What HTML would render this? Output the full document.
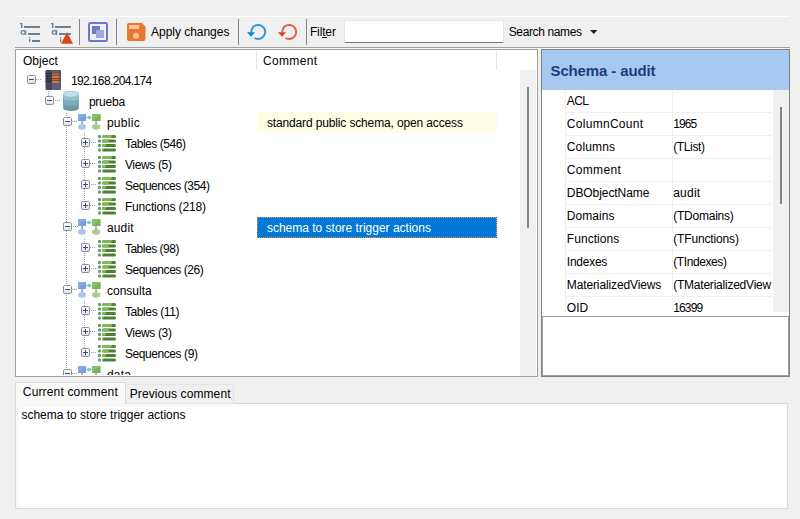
<!DOCTYPE html>
<html><head><meta charset="utf-8"><style>
html,body{margin:0;padding:0;background:#f0f0f0;width:800px;height:519px;overflow:hidden}
svg text{font-family:"Liberation Sans", sans-serif;white-space:pre}
</style></head><body>
<svg width="800" height="519" viewBox="0 0 800 519" style="display:block">
<defs><linearGradient id="bxg" x1="0" y1="0" x2="0" y2="1"><stop offset="0" stop-color="#ffffff"/><stop offset="0.5" stop-color="#f4f4f4"/><stop offset="1" stop-color="#dcdcdc"/></linearGradient></defs>
<rect x="0" y="0" width="800" height="519" fill="#f0f0f0" />
<rect x="15" y="16" width="775" height="1" fill="#ffffff" />
<rect x="15" y="47" width="775" height="1" fill="#a0a0a0" />
<rect x="15" y="48" width="775" height="1" fill="#f7f7f7" />
<rect x="79" y="19" width="1" height="26" fill="#858585" />
<rect x="116" y="19" width="1" height="26" fill="#858585" />
<rect x="238" y="19" width="1" height="26" fill="#858585" />
<rect x="306" y="19" width="1" height="26" fill="#858585" />
<rect x="20" y="23" width="2" height="1.3" fill="#68838f" />
<rect x="21" y="23" width="1.4" height="5" fill="#68838f" />
<rect x="24" y="26" width="16" height="2" fill="#68838f" />
<ellipse cx="23.2" cy="32.4" rx="2.0" ry="1.85" stroke="#68838f" stroke-width="1.15" fill="none"/>
<rect x="24.9" y="30.2" width="1.3" height="4.8" fill="#68838f" />
<rect x="28" y="33" width="12" height="2" fill="#68838f" />
<rect x="29" y="37" width="1.3" height="1.3" fill="#68838f" />
<rect x="29" y="39" width="1.3" height="3" fill="#68838f" />
<rect x="32" y="40" width="8" height="2" fill="#68838f" />
<rect x="51" y="23" width="2" height="1.3" fill="#68838f" />
<rect x="52" y="23" width="1.4" height="5" fill="#68838f" />
<rect x="55" y="26" width="16" height="2" fill="#68838f" />
<ellipse cx="54.2" cy="32.4" rx="2.0" ry="1.85" stroke="#68838f" stroke-width="1.15" fill="none"/>
<rect x="55.9" y="30.2" width="1.3" height="4.8" fill="#68838f" />
<rect x="59" y="33" width="12" height="2" fill="#68838f" />
<rect x="60" y="37" width="1.3" height="1.3" fill="#68838f" />
<rect x="60" y="39" width="1.3" height="3" fill="#68838f" />
<path d="M61 43.8 L67 32.2 L73 43.8 Z" fill="#d9461c"/>
<rect x="89" y="23" width="18" height="18" rx="1.5" fill="none" stroke="#6b78cc" stroke-width="2"/>
<rect x="92" y="26" width="8" height="8" fill="#6c79cf" />
<rect x="96" y="30" width="8" height="8" fill="#9ea8e2" />
<path d="M128.5 23 L142 23 L145.5 26.5 L145.5 39 Q145.5 41 143.5 41 L129 41 Q127 41 127 39 L127 25 Q127 23 129 23 Z" fill="#e8782f"/>
<rect x="129" y="25" width="10" height="4" fill="#f5c3a0" />
<circle cx="136" cy="35.8" r="3" fill="#f5c3a0"/>
<text x="151.10" y="36.10" font-size="12" fill="#000" font-weight="normal" textLength="78.30" lengthAdjust="spacing" >Apply changes</text>
<path d="M251.20 31.90 A7.0 7.0 0 1 1 255.35 38.29" stroke="#2b99e2" stroke-width="2" fill="none" stroke-linecap="round"/>
<path d="M247 32.2 L255 32.2 L251 36.8 Z" fill="#0d7fd8"/>
<path d="M282.20 31.90 A7.0 7.0 0 1 1 286.35 38.29" stroke="#e0663f" stroke-width="2" fill="none" stroke-linecap="round"/>
<path d="M278 32.2 L286 32.2 L282 36.8 Z" fill="#d2461f"/>
<text x="309.90" y="36.00" font-size="12" fill="#000" font-weight="normal" textLength="26.00" lengthAdjust="spacing" >Filter</text>
<rect x="322" y="37" width="5" height="1" fill="#000" />
<rect x="344" y="20" width="160" height="23" fill="#e6e6e6" />
<rect x="345" y="21" width="158" height="21" fill="#ffffff" />
<rect x="345" y="42" width="158" height="1" fill="#767676" />
<text x="508.70" y="35.50" font-size="12" fill="#000" font-weight="normal" textLength="73.30" lengthAdjust="spacing" >Search names</text>
<path d="M590 30 L597.5 30 L593.75 34 Z" fill="#222"/>
<rect x="15" y="49" width="523" height="328" fill="#a0a0a0" />
<rect x="16" y="50" width="521" height="326" fill="#ffffff" />
<text x="22.90" y="64.75" font-size="12" fill="#000" font-weight="normal" textLength="35.00" lengthAdjust="spacing" >Object</text>
<text x="262.90" y="64.80" font-size="12" fill="#000" font-weight="normal" textLength="54.30" lengthAdjust="spacing" >Comment</text>
<rect x="256" y="51" width="1" height="19" fill="#e5e5e5" />
<rect x="496" y="51" width="1" height="19" fill="#e5e5e5" />
<rect x="520" y="70" width="16" height="306" fill="#f0f0f0" />
<rect x="527" y="87" width="2" height="141" fill="#858585" />
<svg x="16" y="50" width="504" height="325" overflow="hidden"><g transform="translate(-16,-50)">
<rect x="257" y="112" width="240" height="21" fill="#fffde5" />
<text x="266.90" y="126.50" font-size="12" fill="#000" font-weight="normal" textLength="196.00" lengthAdjust="spacing" >standard public schema, open access</text>
<rect x="257" y="217" width="240" height="21" fill="#0078d7" />
<rect x="257" y="217" width="1" height="1" fill="#f59434" />
<rect x="257" y="237" width="1" height="1" fill="#f59434" />
<rect x="259" y="217" width="1" height="1" fill="#f59434" />
<rect x="259" y="237" width="1" height="1" fill="#f59434" />
<rect x="261" y="217" width="1" height="1" fill="#f59434" />
<rect x="261" y="237" width="1" height="1" fill="#f59434" />
<rect x="263" y="217" width="1" height="1" fill="#f59434" />
<rect x="263" y="237" width="1" height="1" fill="#f59434" />
<rect x="265" y="217" width="1" height="1" fill="#f59434" />
<rect x="265" y="237" width="1" height="1" fill="#f59434" />
<rect x="267" y="217" width="1" height="1" fill="#f59434" />
<rect x="267" y="237" width="1" height="1" fill="#f59434" />
<rect x="269" y="217" width="1" height="1" fill="#f59434" />
<rect x="269" y="237" width="1" height="1" fill="#f59434" />
<rect x="271" y="217" width="1" height="1" fill="#f59434" />
<rect x="271" y="237" width="1" height="1" fill="#f59434" />
<rect x="273" y="217" width="1" height="1" fill="#f59434" />
<rect x="273" y="237" width="1" height="1" fill="#f59434" />
<rect x="275" y="217" width="1" height="1" fill="#f59434" />
<rect x="275" y="237" width="1" height="1" fill="#f59434" />
<rect x="277" y="217" width="1" height="1" fill="#f59434" />
<rect x="277" y="237" width="1" height="1" fill="#f59434" />
<rect x="279" y="217" width="1" height="1" fill="#f59434" />
<rect x="279" y="237" width="1" height="1" fill="#f59434" />
<rect x="281" y="217" width="1" height="1" fill="#f59434" />
<rect x="281" y="237" width="1" height="1" fill="#f59434" />
<rect x="283" y="217" width="1" height="1" fill="#f59434" />
<rect x="283" y="237" width="1" height="1" fill="#f59434" />
<rect x="285" y="217" width="1" height="1" fill="#f59434" />
<rect x="285" y="237" width="1" height="1" fill="#f59434" />
<rect x="287" y="217" width="1" height="1" fill="#f59434" />
<rect x="287" y="237" width="1" height="1" fill="#f59434" />
<rect x="289" y="217" width="1" height="1" fill="#f59434" />
<rect x="289" y="237" width="1" height="1" fill="#f59434" />
<rect x="291" y="217" width="1" height="1" fill="#f59434" />
<rect x="291" y="237" width="1" height="1" fill="#f59434" />
<rect x="293" y="217" width="1" height="1" fill="#f59434" />
<rect x="293" y="237" width="1" height="1" fill="#f59434" />
<rect x="295" y="217" width="1" height="1" fill="#f59434" />
<rect x="295" y="237" width="1" height="1" fill="#f59434" />
<rect x="297" y="217" width="1" height="1" fill="#f59434" />
<rect x="297" y="237" width="1" height="1" fill="#f59434" />
<rect x="299" y="217" width="1" height="1" fill="#f59434" />
<rect x="299" y="237" width="1" height="1" fill="#f59434" />
<rect x="301" y="217" width="1" height="1" fill="#f59434" />
<rect x="301" y="237" width="1" height="1" fill="#f59434" />
<rect x="303" y="217" width="1" height="1" fill="#f59434" />
<rect x="303" y="237" width="1" height="1" fill="#f59434" />
<rect x="305" y="217" width="1" height="1" fill="#f59434" />
<rect x="305" y="237" width="1" height="1" fill="#f59434" />
<rect x="307" y="217" width="1" height="1" fill="#f59434" />
<rect x="307" y="237" width="1" height="1" fill="#f59434" />
<rect x="309" y="217" width="1" height="1" fill="#f59434" />
<rect x="309" y="237" width="1" height="1" fill="#f59434" />
<rect x="311" y="217" width="1" height="1" fill="#f59434" />
<rect x="311" y="237" width="1" height="1" fill="#f59434" />
<rect x="313" y="217" width="1" height="1" fill="#f59434" />
<rect x="313" y="237" width="1" height="1" fill="#f59434" />
<rect x="315" y="217" width="1" height="1" fill="#f59434" />
<rect x="315" y="237" width="1" height="1" fill="#f59434" />
<rect x="317" y="217" width="1" height="1" fill="#f59434" />
<rect x="317" y="237" width="1" height="1" fill="#f59434" />
<rect x="319" y="217" width="1" height="1" fill="#f59434" />
<rect x="319" y="237" width="1" height="1" fill="#f59434" />
<rect x="321" y="217" width="1" height="1" fill="#f59434" />
<rect x="321" y="237" width="1" height="1" fill="#f59434" />
<rect x="323" y="217" width="1" height="1" fill="#f59434" />
<rect x="323" y="237" width="1" height="1" fill="#f59434" />
<rect x="325" y="217" width="1" height="1" fill="#f59434" />
<rect x="325" y="237" width="1" height="1" fill="#f59434" />
<rect x="327" y="217" width="1" height="1" fill="#f59434" />
<rect x="327" y="237" width="1" height="1" fill="#f59434" />
<rect x="329" y="217" width="1" height="1" fill="#f59434" />
<rect x="329" y="237" width="1" height="1" fill="#f59434" />
<rect x="331" y="217" width="1" height="1" fill="#f59434" />
<rect x="331" y="237" width="1" height="1" fill="#f59434" />
<rect x="333" y="217" width="1" height="1" fill="#f59434" />
<rect x="333" y="237" width="1" height="1" fill="#f59434" />
<rect x="335" y="217" width="1" height="1" fill="#f59434" />
<rect x="335" y="237" width="1" height="1" fill="#f59434" />
<rect x="337" y="217" width="1" height="1" fill="#f59434" />
<rect x="337" y="237" width="1" height="1" fill="#f59434" />
<rect x="339" y="217" width="1" height="1" fill="#f59434" />
<rect x="339" y="237" width="1" height="1" fill="#f59434" />
<rect x="341" y="217" width="1" height="1" fill="#f59434" />
<rect x="341" y="237" width="1" height="1" fill="#f59434" />
<rect x="343" y="217" width="1" height="1" fill="#f59434" />
<rect x="343" y="237" width="1" height="1" fill="#f59434" />
<rect x="345" y="217" width="1" height="1" fill="#f59434" />
<rect x="345" y="237" width="1" height="1" fill="#f59434" />
<rect x="347" y="217" width="1" height="1" fill="#f59434" />
<rect x="347" y="237" width="1" height="1" fill="#f59434" />
<rect x="349" y="217" width="1" height="1" fill="#f59434" />
<rect x="349" y="237" width="1" height="1" fill="#f59434" />
<rect x="351" y="217" width="1" height="1" fill="#f59434" />
<rect x="351" y="237" width="1" height="1" fill="#f59434" />
<rect x="353" y="217" width="1" height="1" fill="#f59434" />
<rect x="353" y="237" width="1" height="1" fill="#f59434" />
<rect x="355" y="217" width="1" height="1" fill="#f59434" />
<rect x="355" y="237" width="1" height="1" fill="#f59434" />
<rect x="357" y="217" width="1" height="1" fill="#f59434" />
<rect x="357" y="237" width="1" height="1" fill="#f59434" />
<rect x="359" y="217" width="1" height="1" fill="#f59434" />
<rect x="359" y="237" width="1" height="1" fill="#f59434" />
<rect x="361" y="217" width="1" height="1" fill="#f59434" />
<rect x="361" y="237" width="1" height="1" fill="#f59434" />
<rect x="363" y="217" width="1" height="1" fill="#f59434" />
<rect x="363" y="237" width="1" height="1" fill="#f59434" />
<rect x="365" y="217" width="1" height="1" fill="#f59434" />
<rect x="365" y="237" width="1" height="1" fill="#f59434" />
<rect x="367" y="217" width="1" height="1" fill="#f59434" />
<rect x="367" y="237" width="1" height="1" fill="#f59434" />
<rect x="369" y="217" width="1" height="1" fill="#f59434" />
<rect x="369" y="237" width="1" height="1" fill="#f59434" />
<rect x="371" y="217" width="1" height="1" fill="#f59434" />
<rect x="371" y="237" width="1" height="1" fill="#f59434" />
<rect x="373" y="217" width="1" height="1" fill="#f59434" />
<rect x="373" y="237" width="1" height="1" fill="#f59434" />
<rect x="375" y="217" width="1" height="1" fill="#f59434" />
<rect x="375" y="237" width="1" height="1" fill="#f59434" />
<rect x="377" y="217" width="1" height="1" fill="#f59434" />
<rect x="377" y="237" width="1" height="1" fill="#f59434" />
<rect x="379" y="217" width="1" height="1" fill="#f59434" />
<rect x="379" y="237" width="1" height="1" fill="#f59434" />
<rect x="381" y="217" width="1" height="1" fill="#f59434" />
<rect x="381" y="237" width="1" height="1" fill="#f59434" />
<rect x="383" y="217" width="1" height="1" fill="#f59434" />
<rect x="383" y="237" width="1" height="1" fill="#f59434" />
<rect x="385" y="217" width="1" height="1" fill="#f59434" />
<rect x="385" y="237" width="1" height="1" fill="#f59434" />
<rect x="387" y="217" width="1" height="1" fill="#f59434" />
<rect x="387" y="237" width="1" height="1" fill="#f59434" />
<rect x="389" y="217" width="1" height="1" fill="#f59434" />
<rect x="389" y="237" width="1" height="1" fill="#f59434" />
<rect x="391" y="217" width="1" height="1" fill="#f59434" />
<rect x="391" y="237" width="1" height="1" fill="#f59434" />
<rect x="393" y="217" width="1" height="1" fill="#f59434" />
<rect x="393" y="237" width="1" height="1" fill="#f59434" />
<rect x="395" y="217" width="1" height="1" fill="#f59434" />
<rect x="395" y="237" width="1" height="1" fill="#f59434" />
<rect x="397" y="217" width="1" height="1" fill="#f59434" />
<rect x="397" y="237" width="1" height="1" fill="#f59434" />
<rect x="399" y="217" width="1" height="1" fill="#f59434" />
<rect x="399" y="237" width="1" height="1" fill="#f59434" />
<rect x="401" y="217" width="1" height="1" fill="#f59434" />
<rect x="401" y="237" width="1" height="1" fill="#f59434" />
<rect x="403" y="217" width="1" height="1" fill="#f59434" />
<rect x="403" y="237" width="1" height="1" fill="#f59434" />
<rect x="405" y="217" width="1" height="1" fill="#f59434" />
<rect x="405" y="237" width="1" height="1" fill="#f59434" />
<rect x="407" y="217" width="1" height="1" fill="#f59434" />
<rect x="407" y="237" width="1" height="1" fill="#f59434" />
<rect x="409" y="217" width="1" height="1" fill="#f59434" />
<rect x="409" y="237" width="1" height="1" fill="#f59434" />
<rect x="411" y="217" width="1" height="1" fill="#f59434" />
<rect x="411" y="237" width="1" height="1" fill="#f59434" />
<rect x="413" y="217" width="1" height="1" fill="#f59434" />
<rect x="413" y="237" width="1" height="1" fill="#f59434" />
<rect x="415" y="217" width="1" height="1" fill="#f59434" />
<rect x="415" y="237" width="1" height="1" fill="#f59434" />
<rect x="417" y="217" width="1" height="1" fill="#f59434" />
<rect x="417" y="237" width="1" height="1" fill="#f59434" />
<rect x="419" y="217" width="1" height="1" fill="#f59434" />
<rect x="419" y="237" width="1" height="1" fill="#f59434" />
<rect x="421" y="217" width="1" height="1" fill="#f59434" />
<rect x="421" y="237" width="1" height="1" fill="#f59434" />
<rect x="423" y="217" width="1" height="1" fill="#f59434" />
<rect x="423" y="237" width="1" height="1" fill="#f59434" />
<rect x="425" y="217" width="1" height="1" fill="#f59434" />
<rect x="425" y="237" width="1" height="1" fill="#f59434" />
<rect x="427" y="217" width="1" height="1" fill="#f59434" />
<rect x="427" y="237" width="1" height="1" fill="#f59434" />
<rect x="429" y="217" width="1" height="1" fill="#f59434" />
<rect x="429" y="237" width="1" height="1" fill="#f59434" />
<rect x="431" y="217" width="1" height="1" fill="#f59434" />
<rect x="431" y="237" width="1" height="1" fill="#f59434" />
<rect x="433" y="217" width="1" height="1" fill="#f59434" />
<rect x="433" y="237" width="1" height="1" fill="#f59434" />
<rect x="435" y="217" width="1" height="1" fill="#f59434" />
<rect x="435" y="237" width="1" height="1" fill="#f59434" />
<rect x="437" y="217" width="1" height="1" fill="#f59434" />
<rect x="437" y="237" width="1" height="1" fill="#f59434" />
<rect x="439" y="217" width="1" height="1" fill="#f59434" />
<rect x="439" y="237" width="1" height="1" fill="#f59434" />
<rect x="441" y="217" width="1" height="1" fill="#f59434" />
<rect x="441" y="237" width="1" height="1" fill="#f59434" />
<rect x="443" y="217" width="1" height="1" fill="#f59434" />
<rect x="443" y="237" width="1" height="1" fill="#f59434" />
<rect x="445" y="217" width="1" height="1" fill="#f59434" />
<rect x="445" y="237" width="1" height="1" fill="#f59434" />
<rect x="447" y="217" width="1" height="1" fill="#f59434" />
<rect x="447" y="237" width="1" height="1" fill="#f59434" />
<rect x="449" y="217" width="1" height="1" fill="#f59434" />
<rect x="449" y="237" width="1" height="1" fill="#f59434" />
<rect x="451" y="217" width="1" height="1" fill="#f59434" />
<rect x="451" y="237" width="1" height="1" fill="#f59434" />
<rect x="453" y="217" width="1" height="1" fill="#f59434" />
<rect x="453" y="237" width="1" height="1" fill="#f59434" />
<rect x="455" y="217" width="1" height="1" fill="#f59434" />
<rect x="455" y="237" width="1" height="1" fill="#f59434" />
<rect x="457" y="217" width="1" height="1" fill="#f59434" />
<rect x="457" y="237" width="1" height="1" fill="#f59434" />
<rect x="459" y="217" width="1" height="1" fill="#f59434" />
<rect x="459" y="237" width="1" height="1" fill="#f59434" />
<rect x="461" y="217" width="1" height="1" fill="#f59434" />
<rect x="461" y="237" width="1" height="1" fill="#f59434" />
<rect x="463" y="217" width="1" height="1" fill="#f59434" />
<rect x="463" y="237" width="1" height="1" fill="#f59434" />
<rect x="465" y="217" width="1" height="1" fill="#f59434" />
<rect x="465" y="237" width="1" height="1" fill="#f59434" />
<rect x="467" y="217" width="1" height="1" fill="#f59434" />
<rect x="467" y="237" width="1" height="1" fill="#f59434" />
<rect x="469" y="217" width="1" height="1" fill="#f59434" />
<rect x="469" y="237" width="1" height="1" fill="#f59434" />
<rect x="471" y="217" width="1" height="1" fill="#f59434" />
<rect x="471" y="237" width="1" height="1" fill="#f59434" />
<rect x="473" y="217" width="1" height="1" fill="#f59434" />
<rect x="473" y="237" width="1" height="1" fill="#f59434" />
<rect x="475" y="217" width="1" height="1" fill="#f59434" />
<rect x="475" y="237" width="1" height="1" fill="#f59434" />
<rect x="477" y="217" width="1" height="1" fill="#f59434" />
<rect x="477" y="237" width="1" height="1" fill="#f59434" />
<rect x="479" y="217" width="1" height="1" fill="#f59434" />
<rect x="479" y="237" width="1" height="1" fill="#f59434" />
<rect x="481" y="217" width="1" height="1" fill="#f59434" />
<rect x="481" y="237" width="1" height="1" fill="#f59434" />
<rect x="483" y="217" width="1" height="1" fill="#f59434" />
<rect x="483" y="237" width="1" height="1" fill="#f59434" />
<rect x="485" y="217" width="1" height="1" fill="#f59434" />
<rect x="485" y="237" width="1" height="1" fill="#f59434" />
<rect x="487" y="217" width="1" height="1" fill="#f59434" />
<rect x="487" y="237" width="1" height="1" fill="#f59434" />
<rect x="489" y="217" width="1" height="1" fill="#f59434" />
<rect x="489" y="237" width="1" height="1" fill="#f59434" />
<rect x="491" y="217" width="1" height="1" fill="#f59434" />
<rect x="491" y="237" width="1" height="1" fill="#f59434" />
<rect x="493" y="217" width="1" height="1" fill="#f59434" />
<rect x="493" y="237" width="1" height="1" fill="#f59434" />
<rect x="495" y="217" width="1" height="1" fill="#f59434" />
<rect x="495" y="237" width="1" height="1" fill="#f59434" />
<rect x="496" y="218" width="1" height="1" fill="#f59434" />
<rect x="257" y="219" width="1" height="1" fill="#f59434" />
<rect x="496" y="220" width="1" height="1" fill="#f59434" />
<rect x="257" y="221" width="1" height="1" fill="#f59434" />
<rect x="496" y="222" width="1" height="1" fill="#f59434" />
<rect x="257" y="223" width="1" height="1" fill="#f59434" />
<rect x="496" y="224" width="1" height="1" fill="#f59434" />
<rect x="257" y="225" width="1" height="1" fill="#f59434" />
<rect x="496" y="226" width="1" height="1" fill="#f59434" />
<rect x="257" y="227" width="1" height="1" fill="#f59434" />
<rect x="496" y="228" width="1" height="1" fill="#f59434" />
<rect x="257" y="229" width="1" height="1" fill="#f59434" />
<rect x="496" y="230" width="1" height="1" fill="#f59434" />
<rect x="257" y="231" width="1" height="1" fill="#f59434" />
<rect x="496" y="232" width="1" height="1" fill="#f59434" />
<rect x="257" y="233" width="1" height="1" fill="#f59434" />
<rect x="496" y="234" width="1" height="1" fill="#f59434" />
<rect x="257" y="235" width="1" height="1" fill="#f59434" />
<rect x="496" y="236" width="1" height="1" fill="#f59434" />
<text x="266.90" y="231.50" font-size="12" fill="#ffffff" font-weight="normal" textLength="164.00" lengthAdjust="spacing" >schema to store trigger actions</text>
<rect x="48" y="91" width="1" height="1" fill="#a0a0a0" />
<rect x="48" y="93" width="1" height="1" fill="#a0a0a0" />
<rect x="48" y="95" width="1" height="1" fill="#a0a0a0" />
<rect x="66" y="113" width="1" height="1" fill="#a0a0a0" />
<rect x="66" y="115" width="1" height="1" fill="#a0a0a0" />
<rect x="66" y="117" width="1" height="1" fill="#a0a0a0" />
<rect x="66" y="119" width="1" height="1" fill="#a0a0a0" />
<rect x="66" y="121" width="1" height="1" fill="#a0a0a0" />
<rect x="66" y="123" width="1" height="1" fill="#a0a0a0" />
<rect x="66" y="125" width="1" height="1" fill="#a0a0a0" />
<rect x="66" y="127" width="1" height="1" fill="#a0a0a0" />
<rect x="66" y="129" width="1" height="1" fill="#a0a0a0" />
<rect x="66" y="131" width="1" height="1" fill="#a0a0a0" />
<rect x="66" y="133" width="1" height="1" fill="#a0a0a0" />
<rect x="66" y="135" width="1" height="1" fill="#a0a0a0" />
<rect x="66" y="137" width="1" height="1" fill="#a0a0a0" />
<rect x="66" y="139" width="1" height="1" fill="#a0a0a0" />
<rect x="66" y="141" width="1" height="1" fill="#a0a0a0" />
<rect x="66" y="143" width="1" height="1" fill="#a0a0a0" />
<rect x="66" y="145" width="1" height="1" fill="#a0a0a0" />
<rect x="66" y="147" width="1" height="1" fill="#a0a0a0" />
<rect x="66" y="149" width="1" height="1" fill="#a0a0a0" />
<rect x="66" y="151" width="1" height="1" fill="#a0a0a0" />
<rect x="66" y="153" width="1" height="1" fill="#a0a0a0" />
<rect x="66" y="155" width="1" height="1" fill="#a0a0a0" />
<rect x="66" y="157" width="1" height="1" fill="#a0a0a0" />
<rect x="66" y="159" width="1" height="1" fill="#a0a0a0" />
<rect x="66" y="161" width="1" height="1" fill="#a0a0a0" />
<rect x="66" y="163" width="1" height="1" fill="#a0a0a0" />
<rect x="66" y="165" width="1" height="1" fill="#a0a0a0" />
<rect x="66" y="167" width="1" height="1" fill="#a0a0a0" />
<rect x="66" y="169" width="1" height="1" fill="#a0a0a0" />
<rect x="66" y="171" width="1" height="1" fill="#a0a0a0" />
<rect x="66" y="173" width="1" height="1" fill="#a0a0a0" />
<rect x="66" y="175" width="1" height="1" fill="#a0a0a0" />
<rect x="66" y="177" width="1" height="1" fill="#a0a0a0" />
<rect x="66" y="179" width="1" height="1" fill="#a0a0a0" />
<rect x="66" y="181" width="1" height="1" fill="#a0a0a0" />
<rect x="66" y="183" width="1" height="1" fill="#a0a0a0" />
<rect x="66" y="185" width="1" height="1" fill="#a0a0a0" />
<rect x="66" y="187" width="1" height="1" fill="#a0a0a0" />
<rect x="66" y="189" width="1" height="1" fill="#a0a0a0" />
<rect x="66" y="191" width="1" height="1" fill="#a0a0a0" />
<rect x="66" y="193" width="1" height="1" fill="#a0a0a0" />
<rect x="66" y="195" width="1" height="1" fill="#a0a0a0" />
<rect x="66" y="197" width="1" height="1" fill="#a0a0a0" />
<rect x="66" y="199" width="1" height="1" fill="#a0a0a0" />
<rect x="66" y="201" width="1" height="1" fill="#a0a0a0" />
<rect x="66" y="203" width="1" height="1" fill="#a0a0a0" />
<rect x="66" y="205" width="1" height="1" fill="#a0a0a0" />
<rect x="66" y="207" width="1" height="1" fill="#a0a0a0" />
<rect x="66" y="209" width="1" height="1" fill="#a0a0a0" />
<rect x="66" y="211" width="1" height="1" fill="#a0a0a0" />
<rect x="66" y="213" width="1" height="1" fill="#a0a0a0" />
<rect x="66" y="215" width="1" height="1" fill="#a0a0a0" />
<rect x="66" y="217" width="1" height="1" fill="#a0a0a0" />
<rect x="66" y="219" width="1" height="1" fill="#a0a0a0" />
<rect x="66" y="221" width="1" height="1" fill="#a0a0a0" />
<rect x="66" y="223" width="1" height="1" fill="#a0a0a0" />
<rect x="66" y="225" width="1" height="1" fill="#a0a0a0" />
<rect x="66" y="227" width="1" height="1" fill="#a0a0a0" />
<rect x="66" y="229" width="1" height="1" fill="#a0a0a0" />
<rect x="66" y="231" width="1" height="1" fill="#a0a0a0" />
<rect x="66" y="233" width="1" height="1" fill="#a0a0a0" />
<rect x="66" y="235" width="1" height="1" fill="#a0a0a0" />
<rect x="66" y="237" width="1" height="1" fill="#a0a0a0" />
<rect x="66" y="239" width="1" height="1" fill="#a0a0a0" />
<rect x="66" y="241" width="1" height="1" fill="#a0a0a0" />
<rect x="66" y="243" width="1" height="1" fill="#a0a0a0" />
<rect x="66" y="245" width="1" height="1" fill="#a0a0a0" />
<rect x="66" y="247" width="1" height="1" fill="#a0a0a0" />
<rect x="66" y="249" width="1" height="1" fill="#a0a0a0" />
<rect x="66" y="251" width="1" height="1" fill="#a0a0a0" />
<rect x="66" y="253" width="1" height="1" fill="#a0a0a0" />
<rect x="66" y="255" width="1" height="1" fill="#a0a0a0" />
<rect x="66" y="257" width="1" height="1" fill="#a0a0a0" />
<rect x="66" y="259" width="1" height="1" fill="#a0a0a0" />
<rect x="66" y="261" width="1" height="1" fill="#a0a0a0" />
<rect x="66" y="263" width="1" height="1" fill="#a0a0a0" />
<rect x="66" y="265" width="1" height="1" fill="#a0a0a0" />
<rect x="66" y="267" width="1" height="1" fill="#a0a0a0" />
<rect x="66" y="269" width="1" height="1" fill="#a0a0a0" />
<rect x="66" y="271" width="1" height="1" fill="#a0a0a0" />
<rect x="66" y="273" width="1" height="1" fill="#a0a0a0" />
<rect x="66" y="275" width="1" height="1" fill="#a0a0a0" />
<rect x="66" y="277" width="1" height="1" fill="#a0a0a0" />
<rect x="66" y="279" width="1" height="1" fill="#a0a0a0" />
<rect x="66" y="281" width="1" height="1" fill="#a0a0a0" />
<rect x="66" y="283" width="1" height="1" fill="#a0a0a0" />
<rect x="66" y="285" width="1" height="1" fill="#a0a0a0" />
<rect x="66" y="287" width="1" height="1" fill="#a0a0a0" />
<rect x="66" y="289" width="1" height="1" fill="#a0a0a0" />
<rect x="66" y="291" width="1" height="1" fill="#a0a0a0" />
<rect x="66" y="293" width="1" height="1" fill="#a0a0a0" />
<rect x="66" y="295" width="1" height="1" fill="#a0a0a0" />
<rect x="66" y="297" width="1" height="1" fill="#a0a0a0" />
<rect x="66" y="299" width="1" height="1" fill="#a0a0a0" />
<rect x="66" y="301" width="1" height="1" fill="#a0a0a0" />
<rect x="66" y="303" width="1" height="1" fill="#a0a0a0" />
<rect x="66" y="305" width="1" height="1" fill="#a0a0a0" />
<rect x="66" y="307" width="1" height="1" fill="#a0a0a0" />
<rect x="66" y="309" width="1" height="1" fill="#a0a0a0" />
<rect x="66" y="311" width="1" height="1" fill="#a0a0a0" />
<rect x="66" y="313" width="1" height="1" fill="#a0a0a0" />
<rect x="66" y="315" width="1" height="1" fill="#a0a0a0" />
<rect x="66" y="317" width="1" height="1" fill="#a0a0a0" />
<rect x="66" y="319" width="1" height="1" fill="#a0a0a0" />
<rect x="66" y="321" width="1" height="1" fill="#a0a0a0" />
<rect x="66" y="323" width="1" height="1" fill="#a0a0a0" />
<rect x="66" y="325" width="1" height="1" fill="#a0a0a0" />
<rect x="66" y="327" width="1" height="1" fill="#a0a0a0" />
<rect x="66" y="329" width="1" height="1" fill="#a0a0a0" />
<rect x="66" y="331" width="1" height="1" fill="#a0a0a0" />
<rect x="66" y="333" width="1" height="1" fill="#a0a0a0" />
<rect x="66" y="335" width="1" height="1" fill="#a0a0a0" />
<rect x="66" y="337" width="1" height="1" fill="#a0a0a0" />
<rect x="66" y="339" width="1" height="1" fill="#a0a0a0" />
<rect x="66" y="341" width="1" height="1" fill="#a0a0a0" />
<rect x="66" y="343" width="1" height="1" fill="#a0a0a0" />
<rect x="66" y="345" width="1" height="1" fill="#a0a0a0" />
<rect x="66" y="347" width="1" height="1" fill="#a0a0a0" />
<rect x="66" y="349" width="1" height="1" fill="#a0a0a0" />
<rect x="66" y="351" width="1" height="1" fill="#a0a0a0" />
<rect x="66" y="353" width="1" height="1" fill="#a0a0a0" />
<rect x="66" y="355" width="1" height="1" fill="#a0a0a0" />
<rect x="66" y="357" width="1" height="1" fill="#a0a0a0" />
<rect x="66" y="359" width="1" height="1" fill="#a0a0a0" />
<rect x="66" y="361" width="1" height="1" fill="#a0a0a0" />
<rect x="66" y="363" width="1" height="1" fill="#a0a0a0" />
<rect x="66" y="365" width="1" height="1" fill="#a0a0a0" />
<rect x="66" y="367" width="1" height="1" fill="#a0a0a0" />
<rect x="66" y="369" width="1" height="1" fill="#a0a0a0" />
<rect x="66" y="371" width="1" height="1" fill="#a0a0a0" />
<rect x="66" y="373" width="1" height="1" fill="#a0a0a0" />
<rect x="66" y="375" width="1" height="1" fill="#a0a0a0" />
<rect x="84" y="133" width="1" height="1" fill="#a0a0a0" />
<rect x="84" y="135" width="1" height="1" fill="#a0a0a0" />
<rect x="84" y="137" width="1" height="1" fill="#a0a0a0" />
<rect x="84" y="139" width="1" height="1" fill="#a0a0a0" />
<rect x="84" y="141" width="1" height="1" fill="#a0a0a0" />
<rect x="84" y="143" width="1" height="1" fill="#a0a0a0" />
<rect x="84" y="145" width="1" height="1" fill="#a0a0a0" />
<rect x="84" y="147" width="1" height="1" fill="#a0a0a0" />
<rect x="84" y="149" width="1" height="1" fill="#a0a0a0" />
<rect x="84" y="151" width="1" height="1" fill="#a0a0a0" />
<rect x="84" y="153" width="1" height="1" fill="#a0a0a0" />
<rect x="84" y="155" width="1" height="1" fill="#a0a0a0" />
<rect x="84" y="157" width="1" height="1" fill="#a0a0a0" />
<rect x="84" y="159" width="1" height="1" fill="#a0a0a0" />
<rect x="84" y="161" width="1" height="1" fill="#a0a0a0" />
<rect x="84" y="163" width="1" height="1" fill="#a0a0a0" />
<rect x="84" y="165" width="1" height="1" fill="#a0a0a0" />
<rect x="84" y="167" width="1" height="1" fill="#a0a0a0" />
<rect x="84" y="169" width="1" height="1" fill="#a0a0a0" />
<rect x="84" y="171" width="1" height="1" fill="#a0a0a0" />
<rect x="84" y="173" width="1" height="1" fill="#a0a0a0" />
<rect x="84" y="175" width="1" height="1" fill="#a0a0a0" />
<rect x="84" y="177" width="1" height="1" fill="#a0a0a0" />
<rect x="84" y="179" width="1" height="1" fill="#a0a0a0" />
<rect x="84" y="181" width="1" height="1" fill="#a0a0a0" />
<rect x="84" y="183" width="1" height="1" fill="#a0a0a0" />
<rect x="84" y="185" width="1" height="1" fill="#a0a0a0" />
<rect x="84" y="187" width="1" height="1" fill="#a0a0a0" />
<rect x="84" y="189" width="1" height="1" fill="#a0a0a0" />
<rect x="84" y="191" width="1" height="1" fill="#a0a0a0" />
<rect x="84" y="193" width="1" height="1" fill="#a0a0a0" />
<rect x="84" y="195" width="1" height="1" fill="#a0a0a0" />
<rect x="84" y="197" width="1" height="1" fill="#a0a0a0" />
<rect x="84" y="199" width="1" height="1" fill="#a0a0a0" />
<rect x="84" y="201" width="1" height="1" fill="#a0a0a0" />
<rect x="84" y="239" width="1" height="1" fill="#a0a0a0" />
<rect x="84" y="241" width="1" height="1" fill="#a0a0a0" />
<rect x="84" y="243" width="1" height="1" fill="#a0a0a0" />
<rect x="84" y="245" width="1" height="1" fill="#a0a0a0" />
<rect x="84" y="247" width="1" height="1" fill="#a0a0a0" />
<rect x="84" y="249" width="1" height="1" fill="#a0a0a0" />
<rect x="84" y="251" width="1" height="1" fill="#a0a0a0" />
<rect x="84" y="253" width="1" height="1" fill="#a0a0a0" />
<rect x="84" y="255" width="1" height="1" fill="#a0a0a0" />
<rect x="84" y="257" width="1" height="1" fill="#a0a0a0" />
<rect x="84" y="259" width="1" height="1" fill="#a0a0a0" />
<rect x="84" y="261" width="1" height="1" fill="#a0a0a0" />
<rect x="84" y="263" width="1" height="1" fill="#a0a0a0" />
<rect x="84" y="301" width="1" height="1" fill="#a0a0a0" />
<rect x="84" y="303" width="1" height="1" fill="#a0a0a0" />
<rect x="84" y="305" width="1" height="1" fill="#a0a0a0" />
<rect x="84" y="307" width="1" height="1" fill="#a0a0a0" />
<rect x="84" y="309" width="1" height="1" fill="#a0a0a0" />
<rect x="84" y="311" width="1" height="1" fill="#a0a0a0" />
<rect x="84" y="313" width="1" height="1" fill="#a0a0a0" />
<rect x="84" y="315" width="1" height="1" fill="#a0a0a0" />
<rect x="84" y="317" width="1" height="1" fill="#a0a0a0" />
<rect x="84" y="319" width="1" height="1" fill="#a0a0a0" />
<rect x="84" y="321" width="1" height="1" fill="#a0a0a0" />
<rect x="84" y="323" width="1" height="1" fill="#a0a0a0" />
<rect x="84" y="325" width="1" height="1" fill="#a0a0a0" />
<rect x="84" y="327" width="1" height="1" fill="#a0a0a0" />
<rect x="84" y="329" width="1" height="1" fill="#a0a0a0" />
<rect x="84" y="331" width="1" height="1" fill="#a0a0a0" />
<rect x="84" y="333" width="1" height="1" fill="#a0a0a0" />
<rect x="84" y="335" width="1" height="1" fill="#a0a0a0" />
<rect x="84" y="337" width="1" height="1" fill="#a0a0a0" />
<rect x="84" y="339" width="1" height="1" fill="#a0a0a0" />
<rect x="84" y="341" width="1" height="1" fill="#a0a0a0" />
<rect x="84" y="343" width="1" height="1" fill="#a0a0a0" />
<rect x="84" y="345" width="1" height="1" fill="#a0a0a0" />
<rect x="84" y="347" width="1" height="1" fill="#a0a0a0" />
<rect x="36" y="79" width="1" height="1" fill="#a0a0a0" />
<rect x="38" y="79" width="1" height="1" fill="#a0a0a0" />
<rect x="40" y="79" width="1" height="1" fill="#a0a0a0" />
<rect x="27.5" y="75.5" width="8" height="8" rx="1.2" fill="url(#bxg)" stroke="#8f8f8f" stroke-width="1"/>
<rect x="29" y="79" width="5" height="1" fill="#2d4f9e" />
<g transform="translate(45,70)"><rect x="0.5" y="0" width="15" height="20" rx="1.2" fill="#46475e"/><rect x="7" y="0" width="8.5" height="20" fill="#5f6078"/><rect x="14.5" y="0" width="1" height="20" fill="#46475e"/><rect x="0.5" y="2.9" width="15" height="1.2" fill="#2b2b3a"/><rect x="7" y="3.1999999999999997" width="7.5" height="1.8" fill="#c06a34"/><rect x="0.5" y="5.6" width="15" height="1.2" fill="#2b2b3a"/><rect x="7" y="5.8999999999999995" width="7.5" height="1.8" fill="#ea7d2c"/><rect x="0.5" y="8.2" width="15" height="1.2" fill="#2b2b3a"/><rect x="7" y="8.5" width="7.5" height="1.8" fill="#c06a34"/><rect x="0.5" y="10.7" width="15" height="1.2" fill="#2b2b3a"/><rect x="7" y="11.0" width="7.5" height="1.8" fill="#ea7d2c"/></g>
<text x="70.90" y="84.50" font-size="12" fill="#000" font-weight="normal" textLength="81.40" lengthAdjust="spacing" >192.168.204.174</text>
<rect x="55" y="100" width="1" height="1" fill="#a0a0a0" />
<rect x="57" y="100" width="1" height="1" fill="#a0a0a0" />
<rect x="59" y="100" width="1" height="1" fill="#a0a0a0" />
<rect x="45.5" y="96.5" width="8" height="8" rx="1.2" fill="url(#bxg)" stroke="#8f8f8f" stroke-width="1"/>
<rect x="47" y="100" width="5" height="1" fill="#2d4f9e" />
<g transform="translate(63,91)"><path d="M0.2 3 Q0.2 0 8 0 Q15.8 0 15.8 3 L15.8 17.3 Q15.8 20 8 20 Q0.2 20 0.2 17.3 Z" fill="#6b99a6"/><path d="M0.2 3 L15.8 3 L15.8 12.5 Q15.8 14.5 8 14.5 Q0.2 14.5 0.2 12.5 Z" fill="#7eabb9"/><path d="M0.2 3 L15.8 3 L15.8 7.5 Q15.8 9.5 8 9.5 Q0.2 9.5 0.2 7.5 Z" fill="#90c2d1"/><ellipse cx="8" cy="3" rx="7.8" ry="2.8" fill="#c3dfe7"/></g>
<text x="88.90" y="105.50" font-size="12" fill="#000" font-weight="normal" textLength="36.25" lengthAdjust="spacing" >prueba</text>
<rect x="72" y="121" width="1" height="1" fill="#a0a0a0" />
<rect x="74" y="121" width="1" height="1" fill="#a0a0a0" />
<rect x="76" y="121" width="1" height="1" fill="#a0a0a0" />
<rect x="63.5" y="117.5" width="8" height="8" rx="1.2" fill="url(#bxg)" stroke="#8f8f8f" stroke-width="1"/>
<rect x="65" y="121" width="5" height="1" fill="#2d4f9e" />
<g transform="translate(78,114)"><rect x="3.3" y="6" width="1.5" height="5" fill="#9a9a9a"/><rect x="17.3" y="6" width="1.5" height="5" fill="#9a9a9a"/><rect x="0" y="0" width="8" height="7" fill="#84ace6"/><path d="M8 0 L8 7 L0 7 Z" fill="#6e97d6" opacity="0.6"/><rect x="14" y="0" width="8.5" height="7" fill="#88c266"/><path d="M22.5 0 L22.5 7 L14 7 Z" fill="#6fa64f" opacity="0.6"/><path d="M8 3.5 L11 1.6 L14 3.5 L11 5.4 Z" fill="#6fd0d0"/><ellipse cx="4" cy="12.8" rx="4" ry="2.9" fill="#a9c6ef"/><ellipse cx="18.2" cy="12.8" rx="4.2" ry="2.9" fill="#a6cf8a"/></g>
<text x="106.90" y="126.50" font-size="12" fill="#000" font-weight="normal" textLength="32.80" lengthAdjust="spacing" >public</text>
<rect x="91" y="142" width="1" height="1" fill="#a0a0a0" />
<rect x="93" y="142" width="1" height="1" fill="#a0a0a0" />
<rect x="95" y="142" width="1" height="1" fill="#a0a0a0" />
<rect x="81.5" y="138.5" width="8" height="8" rx="1.2" fill="url(#bxg)" stroke="#8f8f8f" stroke-width="1"/>
<rect x="83" y="142" width="5" height="1" fill="#2d4f9e" />
<rect x="85" y="140" width="1" height="5" fill="#2d4f9e" />
<g transform="translate(98,135)"><rect x="0" y="0.0" width="3" height="3" rx="1" fill="#5f9d6b"/><rect x="4" y="0.0" width="14" height="3" rx="1.5" fill="#4f7e36"/><path d="M5.5 0.0 L14.5 0.0 L13 3.0 L5.5 3.0 Q4 3.0 4 1.5 Q4 0.0 5.5 0.0 Z" fill="#80b955"/><rect x="0" y="4.5" width="3" height="3" rx="1" fill="#5f9d6b"/><rect x="4" y="4.5" width="14" height="3" rx="1.5" fill="#4f7e36"/><path d="M5.5 4.5 L11.5 4.5 L10 7.5 L5.5 7.5 Q4 7.5 4 6.0 Q4 4.5 5.5 4.5 Z" fill="#80b955"/><rect x="0" y="9.0" width="3" height="3" rx="1" fill="#5f9d6b"/><rect x="4" y="9.0" width="14" height="3" rx="1.5" fill="#4f7e36"/><path d="M5.5 9.0 L8.5 9.0 L7 12.0 L5.5 12.0 Q4 12.0 4 10.5 Q4 9.0 5.5 9.0 Z" fill="#80b955"/><rect x="0" y="13.5" width="3" height="3" rx="1" fill="#5f9d6b"/><rect x="4" y="13.5" width="14" height="3" rx="1.5" fill="#4f7e36"/><path d="M5.5 13.5 L6.0 13.5 L4.5 16.5 L5.5 16.5 Q4 16.5 4 15.0 Q4 13.5 5.5 13.5 Z" fill="#80b955"/></g>
<text x="124.90" y="147.50" font-size="12" fill="#000" font-weight="normal" textLength="61.10" lengthAdjust="spacing" >Tables (546)</text>
<rect x="90" y="163" width="1" height="1" fill="#a0a0a0" />
<rect x="92" y="163" width="1" height="1" fill="#a0a0a0" />
<rect x="94" y="163" width="1" height="1" fill="#a0a0a0" />
<rect x="81.5" y="159.5" width="8" height="8" rx="1.2" fill="url(#bxg)" stroke="#8f8f8f" stroke-width="1"/>
<rect x="83" y="163" width="5" height="1" fill="#2d4f9e" />
<rect x="85" y="161" width="1" height="5" fill="#2d4f9e" />
<g transform="translate(98,156)"><rect x="0" y="0.0" width="3" height="3" rx="1" fill="#5f9d6b"/><rect x="4" y="0.0" width="14" height="3" rx="1.5" fill="#4f7e36"/><path d="M5.5 0.0 L14.5 0.0 L13 3.0 L5.5 3.0 Q4 3.0 4 1.5 Q4 0.0 5.5 0.0 Z" fill="#80b955"/><rect x="0" y="4.5" width="3" height="3" rx="1" fill="#5f9d6b"/><rect x="4" y="4.5" width="14" height="3" rx="1.5" fill="#4f7e36"/><path d="M5.5 4.5 L11.5 4.5 L10 7.5 L5.5 7.5 Q4 7.5 4 6.0 Q4 4.5 5.5 4.5 Z" fill="#80b955"/><rect x="0" y="9.0" width="3" height="3" rx="1" fill="#5f9d6b"/><rect x="4" y="9.0" width="14" height="3" rx="1.5" fill="#4f7e36"/><path d="M5.5 9.0 L8.5 9.0 L7 12.0 L5.5 12.0 Q4 12.0 4 10.5 Q4 9.0 5.5 9.0 Z" fill="#80b955"/><rect x="0" y="13.5" width="3" height="3" rx="1" fill="#5f9d6b"/><rect x="4" y="13.5" width="14" height="3" rx="1.5" fill="#4f7e36"/><path d="M5.5 13.5 L6.0 13.5 L4.5 16.5 L5.5 16.5 Q4 16.5 4 15.0 Q4 13.5 5.5 13.5 Z" fill="#80b955"/></g>
<text x="124.90" y="168.50" font-size="12" fill="#000" font-weight="normal" textLength="47.00" lengthAdjust="spacing" >Views (5)</text>
<rect x="91" y="184" width="1" height="1" fill="#a0a0a0" />
<rect x="93" y="184" width="1" height="1" fill="#a0a0a0" />
<rect x="95" y="184" width="1" height="1" fill="#a0a0a0" />
<rect x="81.5" y="180.5" width="8" height="8" rx="1.2" fill="url(#bxg)" stroke="#8f8f8f" stroke-width="1"/>
<rect x="83" y="184" width="5" height="1" fill="#2d4f9e" />
<rect x="85" y="182" width="1" height="5" fill="#2d4f9e" />
<g transform="translate(98,177)"><rect x="0" y="0.0" width="3" height="3" rx="1" fill="#5f9d6b"/><rect x="4" y="0.0" width="14" height="3" rx="1.5" fill="#4f7e36"/><path d="M5.5 0.0 L14.5 0.0 L13 3.0 L5.5 3.0 Q4 3.0 4 1.5 Q4 0.0 5.5 0.0 Z" fill="#80b955"/><rect x="0" y="4.5" width="3" height="3" rx="1" fill="#5f9d6b"/><rect x="4" y="4.5" width="14" height="3" rx="1.5" fill="#4f7e36"/><path d="M5.5 4.5 L11.5 4.5 L10 7.5 L5.5 7.5 Q4 7.5 4 6.0 Q4 4.5 5.5 4.5 Z" fill="#80b955"/><rect x="0" y="9.0" width="3" height="3" rx="1" fill="#5f9d6b"/><rect x="4" y="9.0" width="14" height="3" rx="1.5" fill="#4f7e36"/><path d="M5.5 9.0 L8.5 9.0 L7 12.0 L5.5 12.0 Q4 12.0 4 10.5 Q4 9.0 5.5 9.0 Z" fill="#80b955"/><rect x="0" y="13.5" width="3" height="3" rx="1" fill="#5f9d6b"/><rect x="4" y="13.5" width="14" height="3" rx="1.5" fill="#4f7e36"/><path d="M5.5 13.5 L6.0 13.5 L4.5 16.5 L5.5 16.5 Q4 16.5 4 15.0 Q4 13.5 5.5 13.5 Z" fill="#80b955"/></g>
<text x="124.90" y="189.50" font-size="12" fill="#000" font-weight="normal" textLength="85.00" lengthAdjust="spacing" >Sequences (354)</text>
<rect x="90" y="205" width="1" height="1" fill="#a0a0a0" />
<rect x="92" y="205" width="1" height="1" fill="#a0a0a0" />
<rect x="94" y="205" width="1" height="1" fill="#a0a0a0" />
<rect x="81.5" y="201.5" width="8" height="8" rx="1.2" fill="url(#bxg)" stroke="#8f8f8f" stroke-width="1"/>
<rect x="83" y="205" width="5" height="1" fill="#2d4f9e" />
<rect x="85" y="203" width="1" height="5" fill="#2d4f9e" />
<g transform="translate(98,198)"><rect x="0" y="0.0" width="3" height="3" rx="1" fill="#5f9d6b"/><rect x="4" y="0.0" width="14" height="3" rx="1.5" fill="#4f7e36"/><path d="M5.5 0.0 L14.5 0.0 L13 3.0 L5.5 3.0 Q4 3.0 4 1.5 Q4 0.0 5.5 0.0 Z" fill="#80b955"/><rect x="0" y="4.5" width="3" height="3" rx="1" fill="#5f9d6b"/><rect x="4" y="4.5" width="14" height="3" rx="1.5" fill="#4f7e36"/><path d="M5.5 4.5 L11.5 4.5 L10 7.5 L5.5 7.5 Q4 7.5 4 6.0 Q4 4.5 5.5 4.5 Z" fill="#80b955"/><rect x="0" y="9.0" width="3" height="3" rx="1" fill="#5f9d6b"/><rect x="4" y="9.0" width="14" height="3" rx="1.5" fill="#4f7e36"/><path d="M5.5 9.0 L8.5 9.0 L7 12.0 L5.5 12.0 Q4 12.0 4 10.5 Q4 9.0 5.5 9.0 Z" fill="#80b955"/><rect x="0" y="13.5" width="3" height="3" rx="1" fill="#5f9d6b"/><rect x="4" y="13.5" width="14" height="3" rx="1.5" fill="#4f7e36"/><path d="M5.5 13.5 L6.0 13.5 L4.5 16.5 L5.5 16.5 Q4 16.5 4 15.0 Q4 13.5 5.5 13.5 Z" fill="#80b955"/></g>
<text x="124.90" y="210.50" font-size="12" fill="#000" font-weight="normal" textLength="81.00" lengthAdjust="spacing" >Functions (218)</text>
<rect x="73" y="226" width="1" height="1" fill="#a0a0a0" />
<rect x="75" y="226" width="1" height="1" fill="#a0a0a0" />
<rect x="77" y="226" width="1" height="1" fill="#a0a0a0" />
<rect x="63.5" y="222.5" width="8" height="8" rx="1.2" fill="url(#bxg)" stroke="#8f8f8f" stroke-width="1"/>
<rect x="65" y="226" width="5" height="1" fill="#2d4f9e" />
<g transform="translate(78,219)"><rect x="3.3" y="6" width="1.5" height="5" fill="#9a9a9a"/><rect x="17.3" y="6" width="1.5" height="5" fill="#9a9a9a"/><rect x="0" y="0" width="8" height="7" fill="#84ace6"/><path d="M8 0 L8 7 L0 7 Z" fill="#6e97d6" opacity="0.6"/><rect x="14" y="0" width="8.5" height="7" fill="#88c266"/><path d="M22.5 0 L22.5 7 L14 7 Z" fill="#6fa64f" opacity="0.6"/><path d="M8 3.5 L11 1.6 L14 3.5 L11 5.4 Z" fill="#6fd0d0"/><ellipse cx="4" cy="12.8" rx="4" ry="2.9" fill="#a9c6ef"/><ellipse cx="18.2" cy="12.8" rx="4.2" ry="2.9" fill="#a6cf8a"/></g>
<text x="106.90" y="231.50" font-size="12" fill="#000" font-weight="normal" textLength="26.70" lengthAdjust="spacing" >audit</text>
<rect x="90" y="247" width="1" height="1" fill="#a0a0a0" />
<rect x="92" y="247" width="1" height="1" fill="#a0a0a0" />
<rect x="94" y="247" width="1" height="1" fill="#a0a0a0" />
<rect x="81.5" y="243.5" width="8" height="8" rx="1.2" fill="url(#bxg)" stroke="#8f8f8f" stroke-width="1"/>
<rect x="83" y="247" width="5" height="1" fill="#2d4f9e" />
<rect x="85" y="245" width="1" height="5" fill="#2d4f9e" />
<g transform="translate(98,240)"><rect x="0" y="0.0" width="3" height="3" rx="1" fill="#5f9d6b"/><rect x="4" y="0.0" width="14" height="3" rx="1.5" fill="#4f7e36"/><path d="M5.5 0.0 L14.5 0.0 L13 3.0 L5.5 3.0 Q4 3.0 4 1.5 Q4 0.0 5.5 0.0 Z" fill="#80b955"/><rect x="0" y="4.5" width="3" height="3" rx="1" fill="#5f9d6b"/><rect x="4" y="4.5" width="14" height="3" rx="1.5" fill="#4f7e36"/><path d="M5.5 4.5 L11.5 4.5 L10 7.5 L5.5 7.5 Q4 7.5 4 6.0 Q4 4.5 5.5 4.5 Z" fill="#80b955"/><rect x="0" y="9.0" width="3" height="3" rx="1" fill="#5f9d6b"/><rect x="4" y="9.0" width="14" height="3" rx="1.5" fill="#4f7e36"/><path d="M5.5 9.0 L8.5 9.0 L7 12.0 L5.5 12.0 Q4 12.0 4 10.5 Q4 9.0 5.5 9.0 Z" fill="#80b955"/><rect x="0" y="13.5" width="3" height="3" rx="1" fill="#5f9d6b"/><rect x="4" y="13.5" width="14" height="3" rx="1.5" fill="#4f7e36"/><path d="M5.5 13.5 L6.0 13.5 L4.5 16.5 L5.5 16.5 Q4 16.5 4 15.0 Q4 13.5 5.5 13.5 Z" fill="#80b955"/></g>
<text x="124.90" y="252.50" font-size="12" fill="#000" font-weight="normal" textLength="54.60" lengthAdjust="spacing" >Tables (98)</text>
<rect x="91" y="268" width="1" height="1" fill="#a0a0a0" />
<rect x="93" y="268" width="1" height="1" fill="#a0a0a0" />
<rect x="95" y="268" width="1" height="1" fill="#a0a0a0" />
<rect x="81.5" y="264.5" width="8" height="8" rx="1.2" fill="url(#bxg)" stroke="#8f8f8f" stroke-width="1"/>
<rect x="83" y="268" width="5" height="1" fill="#2d4f9e" />
<rect x="85" y="266" width="1" height="5" fill="#2d4f9e" />
<g transform="translate(98,261)"><rect x="0" y="0.0" width="3" height="3" rx="1" fill="#5f9d6b"/><rect x="4" y="0.0" width="14" height="3" rx="1.5" fill="#4f7e36"/><path d="M5.5 0.0 L14.5 0.0 L13 3.0 L5.5 3.0 Q4 3.0 4 1.5 Q4 0.0 5.5 0.0 Z" fill="#80b955"/><rect x="0" y="4.5" width="3" height="3" rx="1" fill="#5f9d6b"/><rect x="4" y="4.5" width="14" height="3" rx="1.5" fill="#4f7e36"/><path d="M5.5 4.5 L11.5 4.5 L10 7.5 L5.5 7.5 Q4 7.5 4 6.0 Q4 4.5 5.5 4.5 Z" fill="#80b955"/><rect x="0" y="9.0" width="3" height="3" rx="1" fill="#5f9d6b"/><rect x="4" y="9.0" width="14" height="3" rx="1.5" fill="#4f7e36"/><path d="M5.5 9.0 L8.5 9.0 L7 12.0 L5.5 12.0 Q4 12.0 4 10.5 Q4 9.0 5.5 9.0 Z" fill="#80b955"/><rect x="0" y="13.5" width="3" height="3" rx="1" fill="#5f9d6b"/><rect x="4" y="13.5" width="14" height="3" rx="1.5" fill="#4f7e36"/><path d="M5.5 13.5 L6.0 13.5 L4.5 16.5 L5.5 16.5 Q4 16.5 4 15.0 Q4 13.5 5.5 13.5 Z" fill="#80b955"/></g>
<text x="124.90" y="273.50" font-size="12" fill="#000" font-weight="normal" textLength="78.90" lengthAdjust="spacing" >Sequences (26)</text>
<rect x="72" y="289" width="1" height="1" fill="#a0a0a0" />
<rect x="74" y="289" width="1" height="1" fill="#a0a0a0" />
<rect x="76" y="289" width="1" height="1" fill="#a0a0a0" />
<rect x="63.5" y="285.5" width="8" height="8" rx="1.2" fill="url(#bxg)" stroke="#8f8f8f" stroke-width="1"/>
<rect x="65" y="289" width="5" height="1" fill="#2d4f9e" />
<g transform="translate(78,282)"><rect x="3.3" y="6" width="1.5" height="5" fill="#9a9a9a"/><rect x="17.3" y="6" width="1.5" height="5" fill="#9a9a9a"/><rect x="0" y="0" width="8" height="7" fill="#84ace6"/><path d="M8 0 L8 7 L0 7 Z" fill="#6e97d6" opacity="0.6"/><rect x="14" y="0" width="8.5" height="7" fill="#88c266"/><path d="M22.5 0 L22.5 7 L14 7 Z" fill="#6fa64f" opacity="0.6"/><path d="M8 3.5 L11 1.6 L14 3.5 L11 5.4 Z" fill="#6fd0d0"/><ellipse cx="4" cy="12.8" rx="4" ry="2.9" fill="#a9c6ef"/><ellipse cx="18.2" cy="12.8" rx="4.2" ry="2.9" fill="#a6cf8a"/></g>
<text x="106.90" y="294.50" font-size="12" fill="#000" font-weight="normal" textLength="44.90" lengthAdjust="spacing" >consulta</text>
<rect x="91" y="310" width="1" height="1" fill="#a0a0a0" />
<rect x="93" y="310" width="1" height="1" fill="#a0a0a0" />
<rect x="95" y="310" width="1" height="1" fill="#a0a0a0" />
<rect x="81.5" y="306.5" width="8" height="8" rx="1.2" fill="url(#bxg)" stroke="#8f8f8f" stroke-width="1"/>
<rect x="83" y="310" width="5" height="1" fill="#2d4f9e" />
<rect x="85" y="308" width="1" height="5" fill="#2d4f9e" />
<g transform="translate(98,303)"><rect x="0" y="0.0" width="3" height="3" rx="1" fill="#5f9d6b"/><rect x="4" y="0.0" width="14" height="3" rx="1.5" fill="#4f7e36"/><path d="M5.5 0.0 L14.5 0.0 L13 3.0 L5.5 3.0 Q4 3.0 4 1.5 Q4 0.0 5.5 0.0 Z" fill="#80b955"/><rect x="0" y="4.5" width="3" height="3" rx="1" fill="#5f9d6b"/><rect x="4" y="4.5" width="14" height="3" rx="1.5" fill="#4f7e36"/><path d="M5.5 4.5 L11.5 4.5 L10 7.5 L5.5 7.5 Q4 7.5 4 6.0 Q4 4.5 5.5 4.5 Z" fill="#80b955"/><rect x="0" y="9.0" width="3" height="3" rx="1" fill="#5f9d6b"/><rect x="4" y="9.0" width="14" height="3" rx="1.5" fill="#4f7e36"/><path d="M5.5 9.0 L8.5 9.0 L7 12.0 L5.5 12.0 Q4 12.0 4 10.5 Q4 9.0 5.5 9.0 Z" fill="#80b955"/><rect x="0" y="13.5" width="3" height="3" rx="1" fill="#5f9d6b"/><rect x="4" y="13.5" width="14" height="3" rx="1.5" fill="#4f7e36"/><path d="M5.5 13.5 L6.0 13.5 L4.5 16.5 L5.5 16.5 Q4 16.5 4 15.0 Q4 13.5 5.5 13.5 Z" fill="#80b955"/></g>
<text x="124.90" y="315.50" font-size="12" fill="#000" font-weight="normal" textLength="54.60" lengthAdjust="spacing" >Tables (11)</text>
<rect x="90" y="331" width="1" height="1" fill="#a0a0a0" />
<rect x="92" y="331" width="1" height="1" fill="#a0a0a0" />
<rect x="94" y="331" width="1" height="1" fill="#a0a0a0" />
<rect x="81.5" y="327.5" width="8" height="8" rx="1.2" fill="url(#bxg)" stroke="#8f8f8f" stroke-width="1"/>
<rect x="83" y="331" width="5" height="1" fill="#2d4f9e" />
<rect x="85" y="329" width="1" height="5" fill="#2d4f9e" />
<g transform="translate(98,324)"><rect x="0" y="0.0" width="3" height="3" rx="1" fill="#5f9d6b"/><rect x="4" y="0.0" width="14" height="3" rx="1.5" fill="#4f7e36"/><path d="M5.5 0.0 L14.5 0.0 L13 3.0 L5.5 3.0 Q4 3.0 4 1.5 Q4 0.0 5.5 0.0 Z" fill="#80b955"/><rect x="0" y="4.5" width="3" height="3" rx="1" fill="#5f9d6b"/><rect x="4" y="4.5" width="14" height="3" rx="1.5" fill="#4f7e36"/><path d="M5.5 4.5 L11.5 4.5 L10 7.5 L5.5 7.5 Q4 7.5 4 6.0 Q4 4.5 5.5 4.5 Z" fill="#80b955"/><rect x="0" y="9.0" width="3" height="3" rx="1" fill="#5f9d6b"/><rect x="4" y="9.0" width="14" height="3" rx="1.5" fill="#4f7e36"/><path d="M5.5 9.0 L8.5 9.0 L7 12.0 L5.5 12.0 Q4 12.0 4 10.5 Q4 9.0 5.5 9.0 Z" fill="#80b955"/><rect x="0" y="13.5" width="3" height="3" rx="1" fill="#5f9d6b"/><rect x="4" y="13.5" width="14" height="3" rx="1.5" fill="#4f7e36"/><path d="M5.5 13.5 L6.0 13.5 L4.5 16.5 L5.5 16.5 Q4 16.5 4 15.0 Q4 13.5 5.5 13.5 Z" fill="#80b955"/></g>
<text x="124.90" y="336.50" font-size="12" fill="#000" font-weight="normal" textLength="47.00" lengthAdjust="spacing" >Views (3)</text>
<rect x="91" y="352" width="1" height="1" fill="#a0a0a0" />
<rect x="93" y="352" width="1" height="1" fill="#a0a0a0" />
<rect x="95" y="352" width="1" height="1" fill="#a0a0a0" />
<rect x="81.5" y="348.5" width="8" height="8" rx="1.2" fill="url(#bxg)" stroke="#8f8f8f" stroke-width="1"/>
<rect x="83" y="352" width="5" height="1" fill="#2d4f9e" />
<rect x="85" y="350" width="1" height="5" fill="#2d4f9e" />
<g transform="translate(98,345)"><rect x="0" y="0.0" width="3" height="3" rx="1" fill="#5f9d6b"/><rect x="4" y="0.0" width="14" height="3" rx="1.5" fill="#4f7e36"/><path d="M5.5 0.0 L14.5 0.0 L13 3.0 L5.5 3.0 Q4 3.0 4 1.5 Q4 0.0 5.5 0.0 Z" fill="#80b955"/><rect x="0" y="4.5" width="3" height="3" rx="1" fill="#5f9d6b"/><rect x="4" y="4.5" width="14" height="3" rx="1.5" fill="#4f7e36"/><path d="M5.5 4.5 L11.5 4.5 L10 7.5 L5.5 7.5 Q4 7.5 4 6.0 Q4 4.5 5.5 4.5 Z" fill="#80b955"/><rect x="0" y="9.0" width="3" height="3" rx="1" fill="#5f9d6b"/><rect x="4" y="9.0" width="14" height="3" rx="1.5" fill="#4f7e36"/><path d="M5.5 9.0 L8.5 9.0 L7 12.0 L5.5 12.0 Q4 12.0 4 10.5 Q4 9.0 5.5 9.0 Z" fill="#80b955"/><rect x="0" y="13.5" width="3" height="3" rx="1" fill="#5f9d6b"/><rect x="4" y="13.5" width="14" height="3" rx="1.5" fill="#4f7e36"/><path d="M5.5 13.5 L6.0 13.5 L4.5 16.5 L5.5 16.5 Q4 16.5 4 15.0 Q4 13.5 5.5 13.5 Z" fill="#80b955"/></g>
<text x="124.90" y="357.50" font-size="12" fill="#000" font-weight="normal" textLength="73.00" lengthAdjust="spacing" >Sequences (9)</text>
<rect x="72" y="373" width="1" height="1" fill="#a0a0a0" />
<rect x="74" y="373" width="1" height="1" fill="#a0a0a0" />
<rect x="76" y="373" width="1" height="1" fill="#a0a0a0" />
<rect x="63.5" y="369.5" width="8" height="8" rx="1.2" fill="url(#bxg)" stroke="#8f8f8f" stroke-width="1"/>
<rect x="65" y="373" width="5" height="1" fill="#2d4f9e" />
<g transform="translate(78,366)"><rect x="3.3" y="6" width="1.5" height="5" fill="#9a9a9a"/><rect x="17.3" y="6" width="1.5" height="5" fill="#9a9a9a"/><rect x="0" y="0" width="8" height="7" fill="#84ace6"/><path d="M8 0 L8 7 L0 7 Z" fill="#6e97d6" opacity="0.6"/><rect x="14" y="0" width="8.5" height="7" fill="#88c266"/><path d="M22.5 0 L22.5 7 L14 7 Z" fill="#6fa64f" opacity="0.6"/><path d="M8 3.5 L11 1.6 L14 3.5 L11 5.4 Z" fill="#6fd0d0"/><ellipse cx="4" cy="12.8" rx="4" ry="2.9" fill="#a9c6ef"/><ellipse cx="18.2" cy="12.8" rx="4.2" ry="2.9" fill="#a6cf8a"/></g>
<text x="106.90" y="378.50" font-size="12" fill="#000" font-weight="normal" textLength="24.00" lengthAdjust="spacing" >data</text>
</g></svg>
<rect x="541" y="49" width="249" height="328" fill="#828282" />
<rect x="542" y="50" width="247" height="326" fill="#ffffff" />
<rect x="542" y="50" width="247" height="40" fill="#a7c9ef" />
<text x="550.50" y="76.20" font-size="15" fill="#1f3a80" font-weight="bold" textLength="105.00" lengthAdjust="spacing" >Schema - audit</text>
<rect x="565" y="90" width="1" height="222" fill="#f0f0f0" />
<rect x="672" y="90" width="1" height="222" fill="#f0f0f0" />
<rect x="565" y="112" width="207" height="1" fill="#f0f0f0" />
<rect x="565" y="135" width="207" height="1" fill="#f0f0f0" />
<rect x="565" y="158" width="207" height="1" fill="#f0f0f0" />
<rect x="565" y="181" width="207" height="1" fill="#f0f0f0" />
<rect x="565" y="204" width="207" height="1" fill="#f0f0f0" />
<rect x="565" y="227" width="207" height="1" fill="#f0f0f0" />
<rect x="565" y="250" width="207" height="1" fill="#f0f0f0" />
<rect x="565" y="273" width="207" height="1" fill="#f0f0f0" />
<rect x="565" y="296" width="207" height="1" fill="#f0f0f0" />
<svg x="542" y="90" width="230" height="222" overflow="hidden"><g transform="translate(-542,-90)">
<text x="566.80" y="105.30" font-size="12" fill="#000" font-weight="normal" textLength="22.20" lengthAdjust="spacing" >ACL</text>
<text x="566.80" y="128.30" font-size="12" fill="#000" font-weight="normal" textLength="76.30" lengthAdjust="spacing" >ColumnCount</text>
<text x="673.20" y="128.30" font-size="12" fill="#000" font-weight="normal" textLength="24.10" lengthAdjust="spacing" >1965</text>
<text x="566.80" y="151.30" font-size="12" fill="#000" font-weight="normal" textLength="48.30" lengthAdjust="spacing" >Columns</text>
<text x="673.20" y="151.30" font-size="12" fill="#000" font-weight="normal" textLength="31.80" lengthAdjust="spacing" >(TList)</text>
<text x="566.80" y="174.30" font-size="12" fill="#000" font-weight="normal" textLength="54.00" lengthAdjust="spacing" >Comment</text>
<text x="566.80" y="197.30" font-size="12" fill="#000" font-weight="normal" textLength="82.60" lengthAdjust="spacing" >DBObjectName</text>
<text x="673.20" y="197.30" font-size="12" fill="#000" font-weight="normal" textLength="27.00" lengthAdjust="spacing" >audit</text>
<text x="566.80" y="220.30" font-size="12" fill="#000" font-weight="normal" textLength="47.70" lengthAdjust="spacing" >Domains</text>
<text x="673.20" y="220.30" font-size="12" fill="#000" font-weight="normal" textLength="60.60" lengthAdjust="spacing" >(TDomains)</text>
<text x="566.80" y="243.30" font-size="12" fill="#000" font-weight="normal" textLength="52.50" lengthAdjust="spacing" >Functions</text>
<text x="673.20" y="243.30" font-size="12" fill="#000" font-weight="normal" textLength="65.70" lengthAdjust="spacing" >(TFunctions)</text>
<text x="566.80" y="266.30" font-size="12" fill="#000" font-weight="normal" textLength="40.50" lengthAdjust="spacing" >Indexes</text>
<text x="673.20" y="266.30" font-size="12" fill="#000" font-weight="normal" textLength="53.70" lengthAdjust="spacing" >(TIndexes)</text>
<text x="566.80" y="289.30" font-size="12" fill="#000" font-weight="normal" textLength="94.50" lengthAdjust="spacing" >MaterializedViews</text>
<text x="673.20" y="289.30" font-size="12" fill="#000" font-weight="normal" textLength="98.00" lengthAdjust="spacing" >(TMaterializedView</text>
<text x="566.80" y="312.30" font-size="12" fill="#000" font-weight="normal" >OID</text>
<text x="673.20" y="312.30" font-size="12" fill="#000" font-weight="normal" textLength="30.00" lengthAdjust="spacing" >16399</text>
</g></svg>
<rect x="773" y="90" width="16" height="222" fill="#f0f0f0" />
<rect x="780" y="107" width="2" height="97" fill="#858585" />
<rect x="542" y="316" width="247" height="60" fill="#a0a0a0" />
<rect x="543" y="317" width="245" height="58" fill="#ffffff" />
<rect x="15" y="403" width="773" height="106" fill="#dadada" />
<rect x="16" y="404" width="771" height="104" fill="#f9f9f9" />
<rect x="19" y="407" width="767" height="99" fill="#ffffff" />
<rect x="125" y="384" width="109" height="20" fill="#e3e3e3" />
<rect x="126" y="385" width="107" height="18" fill="#f0f0f0" />
<rect x="15" y="382" width="111" height="22" fill="#dadada" />
<rect x="16" y="383" width="109" height="22" fill="#f9f9f9" />
<text x="22.80" y="395.70" font-size="12" fill="#000" font-weight="normal" textLength="95.00" lengthAdjust="spacing" >Current comment</text>
<text x="129.70" y="398.00" font-size="12" fill="#000" font-weight="normal" textLength="100.80" lengthAdjust="spacing" >Previous comment</text>
<text x="21.40" y="418.70" font-size="12" fill="#000" font-weight="normal" textLength="164.00" lengthAdjust="spacing" >schema to store trigger actions</text>
</svg>
</body></html>
